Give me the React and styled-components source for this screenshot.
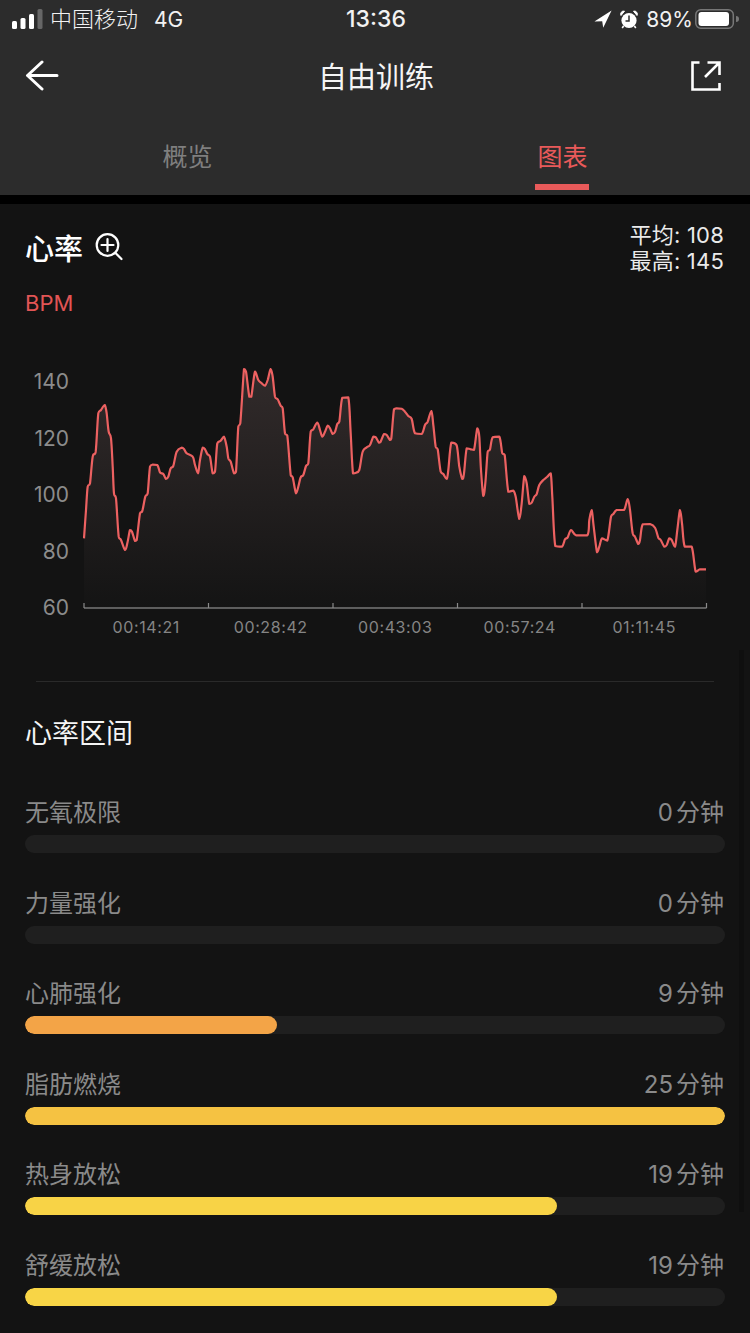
import React from "react";
import styled, { createGlobalStyle } from "styled-components";

const GlobalStyle = createGlobalStyle`
  html, body {
    margin: 0;
    padding: 0;
    background: #131313;
  }
  body {
    font-family: Inter, "Noto Sans CJK SC", sans-serif;
    -webkit-font-smoothing: antialiased;
  }
`;

// heart rate trace, read off the screenshot in 3x crops: [x, y] relative to a crop origin
const seg = (ox, pts) => pts.map(([x, y]) => [ox + x / 3, 350 + y / 3]);

const TRACE = [
  ...seg(0, [
    [252, 565], [258, 480], [263, 410], [270, 400], [278, 320], [287, 305], [295, 190], [303, 180],
    [314, 165], [320, 190], [326, 245], [333, 265], [338, 350], [342, 430], [348, 445], [356, 560],
    [363, 570], [375, 600], [382, 580], [390, 540], [396, 545], [405, 573], [410, 570], [420, 490],
    [427, 483], [436, 440], [443, 430], [450, 350], [458, 344], [472, 345], [480, 367], [490, 372],
    [498, 387], [505, 380], [512, 355], [520, 348], [530, 305], [545, 293], [552, 297], [560, 310],
    [578, 320], [585, 345], [594, 370], [600, 330], [608, 293], [615, 298], [622, 312], [630, 320],
    [638, 370], [645, 365], [652, 280], [662, 272], [672, 260], [680, 290], [685, 325], [692, 335],
    [702, 370], [708, 365],
  ]),
  ...seg(230, [
    [25, 230], [31, 220], [42, 57], [48, 65], [58, 140], [64, 140], [75, 65], [85, 90], [95, 100],
    [105, 107], [113, 90], [122, 57], [128, 80], [135, 140], [143, 148], [152, 167], [158, 175],
    [165, 250], [172, 257], [182, 375], [188, 382], [198, 430], [205, 410], [212, 382], [220, 375],
    [228, 348], [235, 340], [242, 245], [250, 238], [262, 218], [270, 240], [277, 260], [285, 245],
    [293, 227], [300, 235], [308, 252], [315, 245], [322, 222], [328, 215], [337, 143], [355, 142],
    [362, 250], [369, 370], [378, 368], [388, 360], [398, 305], [410, 292], [420, 285], [430, 260],
    [437, 262], [447, 278], [452, 275], [462, 252], [470, 255], [480, 270], [484, 265], [492, 178],
    [500, 175], [515, 176], [525, 185], [535, 198], [545, 207], [555, 250], [575, 252], [585, 225],
    [593, 215], [604, 183], [610, 225], [617, 290], [623, 298], [632, 365], [640, 372], [650, 387],
    [655, 360], [664, 278], [680, 286], [688, 350], [697, 387], [702, 370], [710, 295], [722, 298],
    [732, 300],
  ]),
  ...seg(470, [
    [22, 235], [28, 260], [33, 360], [40, 438], [46, 400], [53, 305], [60, 298], [68, 262], [88, 260],
    [97, 310], [104, 315], [115, 425], [130, 422], [137, 440], [148, 507], [155, 460], [163, 378],
    [170, 400], [178, 462], [185, 458], [193, 440], [200, 432], [208, 405], [220, 390], [232, 380],
    [242, 370], [247, 440], [256, 588], [276, 590], [285, 568], [293, 562], [303, 540], [318, 556],
    [352, 556], [358, 510], [365, 480], [371, 530], [381, 607], [388, 590], [396, 565], [412, 572],
    [423, 500], [430, 492], [440, 480], [462, 480], [473, 447], [480, 480], [488, 550], [495, 560],
    [505, 582], [510, 570], [518, 523], [540, 522], [555, 533], [565, 563], [572, 570], [583, 590],
    [590, 585], [598, 565], [605, 570], [615, 590], [622, 540], [630, 480], [636, 520], [644, 590],
    [665, 590], [677, 665], [690, 658], [708, 658],
  ]),
];

const clamp = (v, a, b) => Math.min(Math.max(a, b), Math.max(Math.min(a, b), v));

// catmull-rom through the points, y clamped per segment so peaks don't overshoot
const smoothPath = (pts) => {
  let d = `M${pts[0][0].toFixed(1)} ${pts[0][1].toFixed(1)}`;
  for (let i = 0; i < pts.length - 1; i++) {
    const p0 = pts[i - 1] || pts[i];
    const p1 = pts[i];
    const p2 = pts[i + 1];
    const p3 = pts[i + 2] || p2;
    const c1x = p1[0] + (p2[0] - p0[0]) / 6;
    const c1y = clamp(p1[1] + (p2[1] - p0[1]) / 6, p1[1], p2[1]);
    const c2x = p2[0] - (p3[0] - p1[0]) / 6;
    const c2y = clamp(p2[1] - (p3[1] - p1[1]) / 6, p1[1], p2[1]);
    d += `C${c1x.toFixed(1)} ${c1y.toFixed(1)} ${c2x.toFixed(1)} ${c2y.toFixed(1)} ${p2[0].toFixed(1)} ${p2[1].toFixed(1)}`;
  }
  return d;
};

const LINE = smoothPath(TRACE);
const AREA = `${LINE}L${TRACE[TRACE.length - 1][0].toFixed(1)} 608L${TRACE[0][0].toFixed(1)} 608Z`;
const TICKS = [84, 208.5, 333, 457.5, 582, 706.5];

const Y_LABELS = [140, 120, 100, 80, 60];
const X_LABELS = ["00:14:21", "00:28:42", "00:43:03", "00:57:24", "01:11:45"];

const ZONES = [
  { name: "无氧极限", minutes: 0, color: "#f3a447" },
  { name: "力量强化", minutes: 0, color: "#f3a447" },
  { name: "心肺强化", minutes: 9, color: "#f3a447" },
  { name: "脂肪燃烧", minutes: 25, color: "#f5c242" },
  { name: "热身放松", minutes: 19, color: "#f8d346" },
  { name: "舒缓放松", minutes: 19, color: "#f8d546" },
];
const MAX_MINUTES = 25;

const App = () => (
  <Page>
    <GlobalStyle />
    <Header>
      <StatusBar>
        <StatusGroup>
          <svg width="31" height="20" viewBox="0 0 31 20">
            <rect x="0" y="12" width="5" height="8" rx="1.5" fill="#fff" />
            <rect x="8.5" y="9" width="5" height="11" rx="1.5" fill="#fff" />
            <rect x="17" y="5" width="5" height="15" rx="1.5" fill="#fff" />
            <rect x="25.5" y="0" width="5" height="20" rx="1.5" fill="#666" />
          </svg>
          <Carrier>中国移动</Carrier>
          <Network>4G</Network>
        </StatusGroup>
        <Clock>13:36</Clock>
        <StatusRight>
          <svg width="18" height="18" viewBox="0 0 18 18">
            <path d="M17.6 0.4 L0.4 11.6 L8.2 11.2 L9.2 17.8 Z" fill="#fff" />
          </svg>
          <AlarmIcon />
          <Battery>89%</Battery>
          <svg width="45" height="20" viewBox="0 0 45 20">
            <rect x="0.8" y="0.8" width="37.5" height="18.4" rx="5" fill="none" stroke="#777" strokeWidth="1.5" />
            <rect x="3.5" y="3" width="30.5" height="14" rx="3" fill="#fff" />
            <path d="M41 7 a3 3 0 0 1 0 6 Z" fill="#777" />
          </svg>
        </StatusRight>
      </StatusBar>
      <NavBar>
        <svg width="34" height="32" viewBox="0 0 34 32">
          <path d="M32 15.5 H3 M17 2 L2.5 15.5 L17 29" fill="none" stroke="#fff" strokeWidth="3" strokeLinecap="round" strokeLinejoin="round" />
        </svg>
        <NavTitle>自由训练</NavTitle>
        <svg width="30" height="30" viewBox="0 0 30 30">
          <path
            d="M8.5 1.5 H1.5 V28.5 H28.5 V22 M16.5 1.5 H28.5 V14 M28 2 L14 16"
            fill="none"
            stroke="#fff"
            strokeWidth="2.6"
          />
        </svg>
      </NavBar>
      <Tabs>
        <Tab>
          <TabLabel>概览</TabLabel>
        </Tab>
        <Tab>
          <TabLabel $active>图表</TabLabel>
          <TabLine />
        </Tab>
      </Tabs>
    </Header>
    <Strip />

    <ChartSection>
      <ChartHead>
        <ChartTitle>
          心率
          <svg width="30" height="30" viewBox="0 0 30 30">
            <circle cx="12.5" cy="13" r="10.8" fill="none" stroke="#fff" strokeWidth="2.2" />
            <path d="M6.5 13 H18.5 M12.5 7 V19 M20.5 21 L26.5 27" fill="none" stroke="#fff" strokeWidth="2.2" strokeLinecap="round" />
          </svg>
        </ChartTitle>
        <Stats>
          <span>平均: 108</span>
          <span>最高: 145</span>
        </Stats>
      </ChartHead>
      <Unit>BPM</Unit>
      <ChartGrid>
        <YAxis>
          {Y_LABELS.map((v) => (
            <YLabel key={v}>{v}</YLabel>
          ))}
        </YAxis>
        <svg width="625" height="266" viewBox="83 350 625 266">
          <defs>
            <linearGradient id="hrFill" gradientUnits="userSpaceOnUse" x1="0" y1="368" x2="0" y2="608">
              <stop offset="0" stopColor="#322b2b" />
              <stop offset="1" stopColor="#141414" />
            </linearGradient>
          </defs>
          <path d={AREA} fill="url(#hrFill)" />
          <path d={LINE} fill="none" stroke="#ec6161" strokeWidth="2.2" strokeLinejoin="round" />
          <path d="M84 608 H706.5" stroke="#777" strokeWidth="1.5" />
          {TICKS.map((x) => (
            <path key={x} d={`M${x} 603 V608`} stroke="#8a8a8a" strokeWidth="1.2" />
          ))}
        </svg>
      </ChartGrid>
      <XAxis>
        {X_LABELS.map((t) => (
          <XLabel key={t}>{t}</XLabel>
        ))}
      </XAxis>
      <Divider />
    </ChartSection>

    <ZoneSection>
      <ZoneTitle>心率区间</ZoneTitle>
      {ZONES.map((z) => (
        <ZoneRow key={z.name}>
          <ZoneHead>
            <span>{z.name}</span>
            <span>
              {z.minutes}
              <ZoneUnit>分钟</ZoneUnit>
            </span>
          </ZoneHead>
          <Track>
            {z.minutes > 0 && (
              <Fill $color={z.color} style={{ width: `${(z.minutes / MAX_MINUTES) * 100}%` }} />
            )}
          </Track>
        </ZoneRow>
      ))}
    </ZoneSection>
    <ScrollThumb />
  </Page>
);

const AlarmIcon = () => (
  <svg width="18" height="19" viewBox="0 0 18 19">
    <circle cx="9" cy="10.5" r="7.6" fill="#fff" />
    <path d="M1 5.5 L4.5 1.2 A3 3 0 0 0 1 5.5 Z M17 5.5 L13.5 1.2 A3 3 0 0 1 17 5.5 Z" fill="#fff" stroke="#fff" />
    <path d="M3.6 16 L2.2 18 M14.4 16 L15.8 18" stroke="#fff" strokeWidth="1.6" />
    <path d="M9 5.5 V11 H5.5" fill="none" stroke="#2c2c2c" strokeWidth="1.5" />
  </svg>
);

const Page = styled.div`
  position: relative;
  width: 750px;
  height: 1333px;
  overflow: hidden;
  background: #131313;
  font-family: Inter, "Noto Sans CJK SC", sans-serif;
`;

const Header = styled.header`
  background: #2c2c2c;
`;

const StatusBar = styled.div`
  display: grid;
  grid-template-columns: 1fr auto 1fr;
  align-items: center;
  height: 38px;
  padding: 0 10px 0 12px;
  color: #f2f2f2;
  font-size: 21px;
`;

const StatusGroup = styled.div`
  display: flex;
  align-items: center;
`;

const StatusRight = styled(StatusGroup)`
  justify-content: flex-end;
  svg:first-child {
    margin-right: 8px;
  }
`;

const Carrier = styled.span`
  margin: 0 0 4px 7px;
  font-size: 22px;
  font-weight: 300;
`;

const Network = styled.span`
  margin-left: 16px;
  font-size: 21px;
`;

const Clock = styled.span`
  font-size: 23px;
  font-weight: 500;
`;

const Battery = styled.span`
  margin: 0 2px 0 8px;
  font-size: 21px;
`;

const NavBar = styled.nav`
  display: grid;
  grid-template-columns: 1fr auto 1fr;
  align-items: center;
  height: 76px;
  padding: 0 29px 0 25px;
  svg:last-child {
    justify-self: end;
  }
`;

const NavTitle = styled.h1`
  margin: 0;
  padding: 0 0 3px 6px;
  color: #f5f5f5;
  font-size: 29px;
  font-weight: 400;
`;

const Tabs = styled.div`
  display: flex;
  height: 81px;
  padding-top: 25px;
  box-sizing: border-box;
`;

const Tab = styled.div`
  flex: 1;
  display: flex;
  flex-direction: column;
  align-items: center;
`;

const TabLabel = styled.span`
  color: ${(p) => (p.$active ? "#e95a5a" : "#7f7f7f")};
  font-size: 25px;
  line-height: 36px;
`;

const TabLine = styled.div`
  width: 54px;
  height: 6px;
  margin: 9px 1px 0 0;
  background: #e95a5a;
`;

const Strip = styled.div`
  height: 9px;
  background: #000;
`;

const ChartSection = styled.section`
  padding: 18px 25px 0;
`;

const ChartHead = styled.div`
  display: flex;
  justify-content: space-between;
  align-items: flex-start;
`;

const ChartTitle = styled.h2`
  display: flex;
  align-items: center;
  gap: 12px;
  height: 50px;
  margin: 0;
  color: #fff;
  font-size: 29px;
  font-weight: 500;
`;

const Stats = styled.div`
  display: flex;
  flex-direction: column;
  align-items: flex-end;
  margin-right: 1px;
  color: #eaeaea;
  font-size: 22px;
  line-height: 26px;
  letter-spacing: 0.2px;
`;

const Unit = styled.div`
  margin-top: 17px;
  color: #e25555;
  font-size: 22px;
  line-height: 24px;
`;

const ChartGrid = styled.div`
  display: grid;
  grid-template-columns: 44px auto;
  column-gap: 14px;
  height: 266px;
  margin-top: 35px;
`;

const YAxis = styled.div`
  display: flex;
  flex-direction: column;
  justify-content: space-between;
  align-items: flex-end;
  box-sizing: border-box;
  height: 268px;
  padding-top: 22px;
`;

const YLabel = styled.span`
  color: #8c8c8c;
  font-size: 21px;
  line-height: 20px;
`;

const XAxis = styled.div`
  display: grid;
  grid-template-columns: repeat(5, 1fr);
  width: 622.5px;
  margin-left: 59px;
  padding-top: 1px;
`;

const XLabel = styled.span`
  color: #858585;
  font-size: 16px;
  line-height: 20px;
  letter-spacing: 0.6px;
  text-align: center;
`;

const Divider = styled.div`
  height: 1px;
  margin: 44px 11px 0;
  background: #2a2a2a;
`;

const ZoneSection = styled.section`
  padding: 33px 25px 0;
`;

const ZoneTitle = styled.h2`
  margin: 0 0 42px;
  color: #f5f5f5;
  font-size: 27px;
  font-weight: 400;
  line-height: 38px;
`;

const ZoneRow = styled.div`
  height: 90.5px;
`;

const ZoneHead = styled.div`
  display: flex;
  justify-content: space-between;
  height: 34px;
  margin-bottom: 6px;
  padding-right: 1px;
  color: #8a8a8a;
  font-size: 24px;
  line-height: 36px;
`;

const ZoneUnit = styled.span`
  margin-left: 3px;
`;

const Track = styled.div`
  height: 18px;
  border-radius: 9px;
  background: #1f1f1f;
  overflow: hidden;
`;

const Fill = styled.div`
  height: 100%;
  border-radius: 9px;
  background: ${(p) => p.$color};
`;

const ScrollThumb = styled.div`
  position: absolute;
  top: 650px;
  left: 739px;
  width: 5px;
  height: 562px;
  background: #0f0f0f;
`;

export default App;
